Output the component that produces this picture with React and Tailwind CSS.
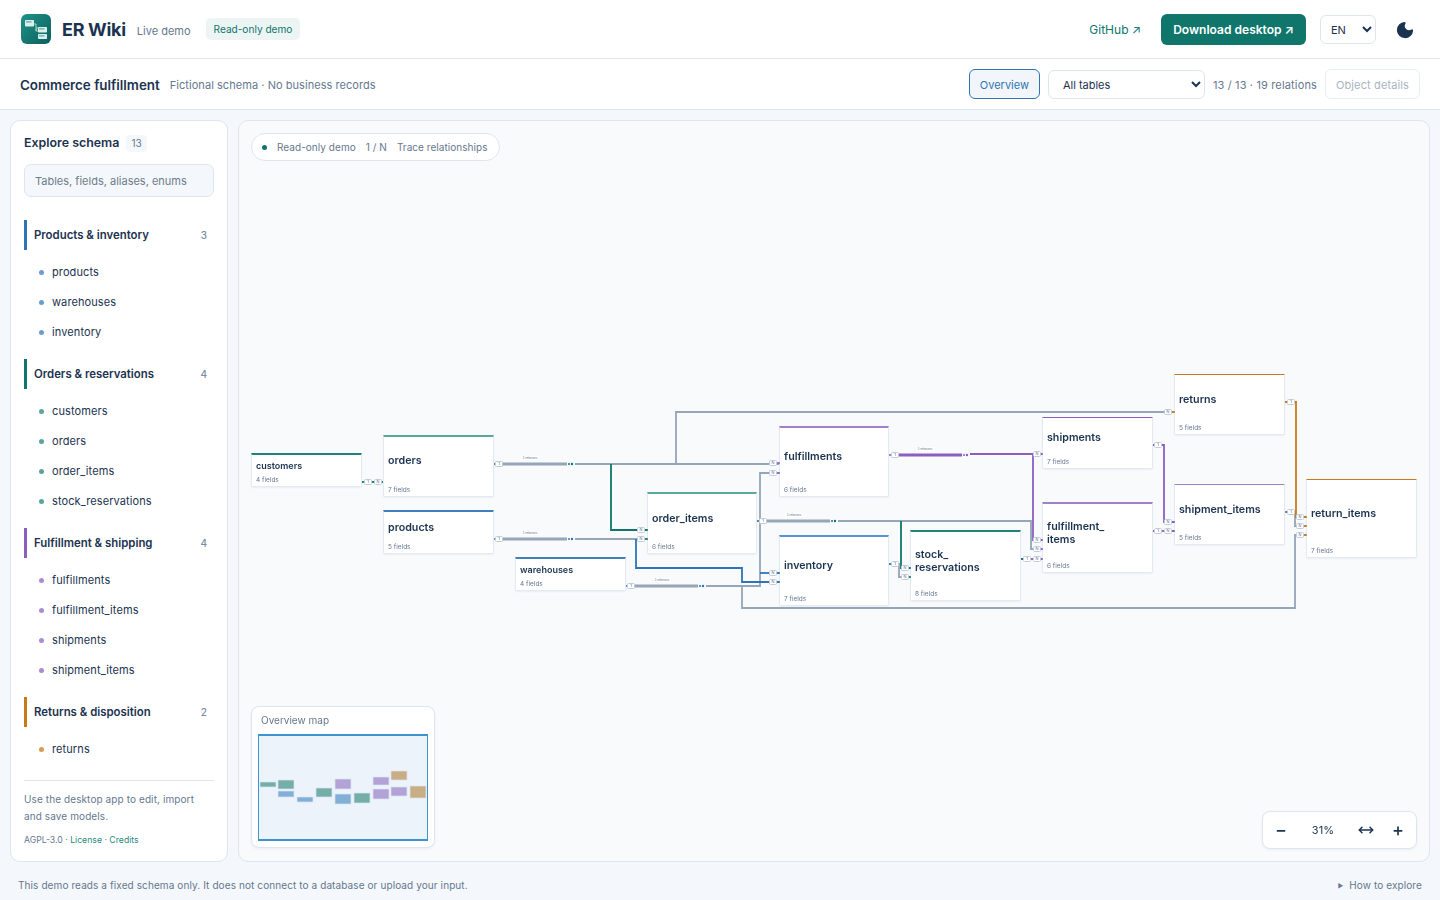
import React from 'react';
import { Moon, MoveHorizontal } from 'lucide-react';

const TEAL = '#0f766e';
const BLUE = '#2f75b5';
const PURPLE = '#8a5fbf';
const ORANGE = '#c9791a';
const SLATE = '#96a5b8';

const groups = [
  { name: 'Products & inventory', count: 3, bar: 'bg-[#2f75b5]', dot: 'bg-[#6b9bd0]', items: ['products', 'warehouses', 'inventory'] },
  { name: 'Orders & reservations', count: 4, bar: 'bg-[#0f766e]', dot: 'bg-[#5aa49d]', items: ['customers', 'orders', 'order_items', 'stock_reservations'] },
  { name: 'Fulfillment & shipping', count: 4, bar: 'bg-[#8a5fbf]', dot: 'bg-[#ab8bd2]', items: ['fulfillments', 'fulfillment_items', 'shipments', 'shipment_items'] },
  { name: 'Returns & disposition', count: 2, bar: 'bg-[#c9791a]', dot: 'bg-[#d99a52]', items: ['returns'] },
];

// page coordinates, the canvas offset is taken off when drawing
const nodes = [
  { name: 'customers', fields: 4, x: 251, y: 453, w: 111, h: 34, color: '#1f8379', line: 2, small: true, top: 1 },
  { name: 'orders', fields: 7, x: 383, y: 435, w: 111, h: 62, color: '#5aa79e', line: 2, bottom: 2 },
  { name: 'products', fields: 5, x: 383, y: 510, w: 111, h: 44, color: '#3f80bd', line: 2, top: 1 },
  { name: 'warehouses', fields: 4, x: 515, y: 557, w: 111, h: 34, color: '#3f80bd', line: 2, small: true, top: 1 },
  { name: 'order_items', fields: 6, x: 647, y: 492, w: 110, h: 62, color: '#5aa79e', line: 2 },
  { name: 'fulfillments', fields: 6, x: 779, y: 426, w: 110, h: 71, color: '#a07fcb', line: 2 },
  { name: 'inventory', fields: 7, x: 779, y: 535, w: 110, h: 71, color: '#5b93cc', line: 2 },
  { name: ['stock_', 'reservations'], fields: 8, x: 910, y: 530, w: 111, h: 71, color: '#1f8379', line: 2 },
  { name: 'shipments', fields: 7, x: 1042, y: 417, w: 111, h: 52, color: PURPLE, bottom: 1 },
  { name: ['fulfillment_', 'items'], fields: 6, x: 1042, y: 502, w: 111, h: 71, color: '#a07fcb', line: 2 },
  { name: 'returns', fields: 5, x: 1174, y: 374, w: 111, h: 61, color: ORANGE },
  { name: 'shipment_items', fields: 5, x: 1174, y: 484, w: 111, h: 61, color: '#a07fcb' },
  { name: 'return_items', fields: 7, x: 1306, y: 479, w: 111, h: 79, color: ORANGE },
];

const edges = [
  { c: SLATE, w: 1.8, d: 'M575 464H779' },
  { c: SLATE, w: 1.8, d: 'M676 464V412H1174' },
  { c: SLATE, w: 1.8, d: 'M575 539H647' },
  { c: SLATE, w: 1.8, d: 'M705 586H760V473H779' },
  { c: SLATE, w: 1.8, d: 'M742 586V608H1295V535H1306' },
  { c: SLATE, w: 1.8, d: 'M838 521H1031V549H1043' },
  { c: SLATE, w: 1.8, d: 'M889 564H899V577H911' },
  { c: SLATE, w: 1.8, d: 'M1285 512H1295V526H1306' },
  { c: TEAL, w: 1.8, d: 'M611 464V530H647' },
  { c: TEAL, w: 1.8, d: 'M901 521V568H911' },
  { c: TEAL, w: 1.8, d: 'M362 482H383' },
  { c: BLUE, w: 1.8, d: 'M636 539V568H742V582H779' },
  { c: BLUE, w: 1.8, d: 'M760 573H779' },
  { c: PURPLE, w: 1.8, d: 'M968 454H1033V540H1043' },
  { c: PURPLE, w: 1.8, d: 'M1033 454H1043' },
  { c: PURPLE, w: 1.8, d: 'M1021 559H1043' },
  { c: PURPLE, w: 1.8, d: 'M1153 531H1174' },
  { c: PURPLE, w: 1.8, d: 'M1153 445H1164V522H1174' },
  { c: ORANGE, w: 1.8, d: 'M1285 402H1296V517H1306' },
  // thick runs beside the grouped relation labels
  { c: SLATE, w: 3, d: 'M497 464H567' },
  { c: SLATE, w: 3, d: 'M497 539H567' },
  { c: SLATE, w: 3, d: 'M630 586H699' },
  { c: SLATE, w: 3, d: 'M761 521H830' },
  { c: PURPLE, w: 3, d: 'M893 455H962' },
];

// short coloured ends where a relation meets its table
const stubs = [
  [494, 464, 497, TEAL], [494, 539, 497, BLUE], [626, 586, 630, BLUE], [757, 521, 761, TEAL],
  [889, 455, 893, PURPLE], [889, 564, 893, BLUE], [1021, 559, 1025, TEAL], [1153, 445, 1156, PURPLE],
  [1153, 531, 1156, PURPLE], [1285, 402, 1288, ORANGE], [1285, 512, 1288, PURPLE],
  [645, 530, 648, TEAL], [645, 539, 648, TEAL], [777, 463, 780, PURPLE], [777, 473, 780, PURPLE],
  [777, 573, 780, BLUE], [777, 582, 780, BLUE], [909, 568, 911, TEAL], [909, 577, 911, TEAL],
  [1041, 454, 1043, PURPLE], [1041, 540, 1043, PURPLE], [1041, 549, 1043, PURPLE], [1041, 559, 1043, PURPLE],
  [1172, 412, 1175, ORANGE], [1172, 522, 1175, PURPLE], [1172, 531, 1175, PURPLE],
  [1304, 517, 1307, ORANGE], [1304, 526, 1307, ORANGE], [1304, 535, 1307, ORANGE],
];

const dots = [
  [571, 464, TEAL], [571, 539, BLUE], [702, 586, BLUE], [834, 521, TEAL], [966, 455, PURPLE],
];

const labels = [
  [530, 458, '3 relations'], [530, 533, '3 relations'], [662, 580, '3 relations'], [794, 515, '3 relations'], [925, 449, '3 relations'],
];

const badges = [
  [368, 482, '1'], [378, 482, 'N'],
  [499, 464, '1'], [499, 539, '1'], [631, 586, '1'], [763, 521, '1'], [895, 455, '1'], [895, 564, '1'],
  [641, 530, 'N'], [641, 539, 'N'],
  [773, 463, 'N'], [773, 473, 'N'], [773, 573, 'N'], [773, 582, 'N'],
  [905, 568, 'N'], [905, 577, 'N'],
  [1027, 559, '1'], [1037, 559, 'N'], [1037, 454, 'N'], [1037, 540, 'N'], [1037, 549, 'N'],
  [1158, 445, '1'], [1158, 531, '1'], [1168, 531, 'N'], [1168, 522, 'N'], [1168, 412, 'N'],
  [1291, 402, '1'], [1291, 512, '1'], [1300, 517, 'N'], [1300, 526, 'N'], [1300, 535, 'N'],
];

const mapBlocks = [
  [260, 782, 16, 5, '#74aea9'], [278, 780, 16, 9, '#74aea9'], [278, 791, 16, 6, '#83aed8'],
  [297, 797, 16, 5, '#83aed8'], [316, 788, 16, 9, '#74aea9'], [335, 779, 16, 10, '#b3a2d6'],
  [335, 794, 16, 10, '#83aed8'], [354, 793, 16, 10, '#74aea9'], [373, 777, 16, 8, '#b3a2d6'],
  [373, 789, 16, 10, '#b3a2d6'], [391, 771, 16, 9, '#c9ad85'], [391, 787, 16, 9, '#b3a2d6'],
  [410, 786, 16, 12, '#c9ad85'],
];

function Logo() {
  return (
    <svg width="30" height="30" viewBox="0 0 30 30" className="shrink-0">
      <defs>
        <linearGradient id="logo" x1="0" y1="0" x2="1" y2="1">
          <stop offset="0" stopColor="#1f9488" />
          <stop offset="1" stopColor="#0b5f5e" />
        </linearGradient>
      </defs>
      <rect width="30" height="30" rx="6" fill="url(#logo)" />
      <path d="M13 10H15V17M15 17H18M15 14H18" stroke="#9fd8cf" strokeWidth="1" fill="none" />
      <path d="M14.500 15H16V16.500H14.500Z" fill="#e2c15a" />
      <rect x="4" y="6" width="9" height="6.500" rx="0.800" fill="#d9efec" />
      <rect x="5" y="7.200" width="5.500" height="1.300" fill="#6fa9a4" />
      <rect x="17" y="13" width="9" height="5.500" rx="0.800" fill="#d9efec" />
      <rect x="18" y="14.200" width="5.500" height="1.300" fill="#6fa9a4" />
      <rect x="17" y="20" width="9" height="5" rx="0.800" fill="#d9efec" />
      <rect x="18" y="21.200" width="5.500" height="1.300" fill="#6fa9a4" />
    </svg>
  );
}

function Node({ node }) {
  const lines = Array.isArray(node.name) ? node.name : [node.name];
  return (
    <div
      className="absolute flex flex-col bg-white border border-[#e3eaf3] rounded-b-[2px] px-[4px] shadow-[0_1px_2px_rgba(30,55,90,0.06)] will-change-transform"
      style={{
        left: node.x - 239,
        top: node.y - 121,
        width: node.w,
        height: node.h,
        borderTop: `${node.line || 1}px solid ${node.color}`,
      }}
    >
      <div
        className={`flex-1 flex flex-col justify-center font-semibold text-[#1b3350] ${node.small ? 'text-[9px] leading-[11px]' : 'text-[10.700px] leading-[13px]'}`}
        style={{ paddingTop: node.top || 0, paddingBottom: node.bottom || 0 }}
      >
        {lines.map(l => <span key={l}>{l}</span>)}
      </div>
      <div className="h-[11px] pt-[1px] text-[6.500px] leading-[9px] text-[#66788f]">{node.fields} fields</div>
    </div>
  );
}

function Diagram() {
  return (
    <>
      <svg className="absolute left-0 top-0" width="1190" height="740" viewBox="239 121 1190 740">
        {edges.map((e, i) => (
          <path key={i} d={e.d} stroke={e.c} strokeWidth={e.w} fill="none" />
        ))}
        {dots.map(([x, y, c], i) => (
          <g key={i}>
            <rect x={x - 4} y={y - 2} width="8" height="4" fill="#f8fafc" />
            <circle cx={x - 2} cy={y} r="1" fill={c} />
            <circle cx={x + 1} cy={y} r="1.200" fill={c} />
          </g>
        ))}
        {labels.map(([x, y, t], i) => (
          <g key={i}>
            <rect x={x - 9} y={y - 2} width="18" height="4" fill="#ffffff" />
            <text x={x} y={y + 1} fontSize="3" textAnchor="middle" fill="#66788f">{t}</text>
          </g>
        ))}
      </svg>
      {nodes.map(n => <Node key={n.x + '-' + n.y} node={n} />)}
      <svg className="absolute left-0 top-0 will-change-transform" width="1190" height="740" viewBox="239 121 1190 740">
        {stubs.map(([x1, y, x2, c], i) => (
          <path key={i} d={`M${x1} ${y}H${x2}`} stroke={c} strokeWidth="1.500" fill="none" />
        ))}
        {badges.map(([x, y, t], i) => (
          <g key={i}>
            <rect x={x - 3.500} y={y - 2.500} width="7" height="5" rx="1" fill="#ffffff" stroke="#c0ccda" strokeWidth="1" />
            <text x={x} y={y + 1.400} fontSize="4" textAnchor="middle" fill="#5c6f86">{t}</text>
          </g>
        ))}
      </svg>
    </>
  );
}

function Sidebar() {
  return (
    <aside className="w-[218px] shrink-0 flex flex-col bg-white border border-[#dde6f0] rounded-[10px] px-[13px] pt-[13px] pb-[15px]">
      <div className="flex items-center gap-[7px] h-[17px] pt-[1px]">
        <h2 className="text-[12.400px] font-semibold text-[#1b3350]">Explore schema</h2>
        <span className="bg-[#f4f7fb] rounded-[4px] px-[5px] py-[1px] text-[10px] text-[#66788f]">13</span>
      </div>
      <input
        placeholder="Tables, fields, aliases, enums"
        className="mt-[13px] h-[33px] w-full bg-[#f4f7fb] border border-[#dde6f0] rounded-[7px] px-[10px] text-[11px] text-[#1b3350] placeholder:text-[#6f7c8b] outline-none"
      />
      <div className="mt-[23px] flex flex-col gap-[12px]">
        {groups.map(g => (
          <div key={g.name}>
            <div className="flex items-center h-[30px]">
              <span className={`w-[3px] h-full ${g.bar}`} />
              <span className="ml-[7px] pt-[2px] flex-1 text-[11.400px] font-semibold text-[#1b3350]">{g.name}</span>
              <span className="mr-[7px] pt-[1px] text-[10px] font-medium text-[#7b8ba0]">{g.count}</span>
            </div>
            <ul className="mt-[7px]">
              {g.items.map(item => (
                <li key={item} className="flex items-center h-[30px] pl-[15px] text-[11px] tracking-[0.1px] text-[#1b3350]">
                  <span className={`w-[5px] h-[5px] rounded-full ${g.dot}`} />
                  <span className="ml-[8px]">{item}</span>
                </li>
              ))}
            </ul>
          </div>
        ))}
      </div>
      <div className="mt-auto border-t border-[#dde6f0] pt-[10px]">
        <p className="text-[10px] tracking-[0.1px] leading-[17px] text-[#66788f]">Use the desktop app to edit, import<br />and save models.</p>
        <p className="mt-[9px] text-[8.700px] leading-[12px] text-[#66788f]">
          AGPL-3.0 · <a className="text-[#2a8a80]">License</a> · <a className="text-[#2a8a80]">Credits</a>
        </p>
      </div>
    </aside>
  );
}

export default function App() {
  return (
    <div className="h-screen w-full overflow-hidden flex flex-col bg-[#f4f7fb] text-[#1b3350] font-['Inter',sans-serif]">
      <header className="h-[59px] shrink-0 flex items-center bg-white border-b border-[#dde6f0] pl-[21px] pr-[25px]">
        <Logo />
        <span className="ml-[11px] text-[18px] font-bold tracking-[-0.3px] text-[#1b3350]">ER Wiki</span>
        <span className="ml-[11px] mt-[5px] text-[11px] text-[#66788f]">Live demo</span>
        <span className="ml-[15px] h-[22px] pt-[1px] flex items-center rounded-[5px] bg-[#ecf5f3] px-[8px] text-[10.100px] text-[#0f766e]">Read-only demo</span>
        <a className="ml-auto pt-[2px] text-[12px] text-[#0f766e]">GitHub ↗</a>
        <a className="ml-[20px] h-[31px] pt-[2px] flex items-center rounded-[6px] bg-[#10766c] px-[12px] text-[12px] font-semibold tracking-[0.02px] text-white">Download desktop ↗</a>
        <select defaultValue="EN" className="ml-[14px] h-[29px] w-[56px] pt-[1px] bg-white border border-[#dde6f0] rounded-[6px] px-[6px] text-[11px] text-[#1b3350]">
          <option>EN</option>
        </select>
        <button className="ml-[19px] mt-[1px] flex items-center justify-center text-[#1b3350]">
          <Moon size={20} fill="#1b3350" strokeWidth={1.5} />
        </button>
      </header>

      <div className="h-[51px] shrink-0 flex items-center bg-white border-b border-[#dde6f0] pl-[20px] pr-[20px]">
        <h1 className="pt-[2px] text-[13.400px] font-semibold text-[#1b3350]">Commerce fulfillment</h1>
        <span className="ml-[10px] pt-[2px] text-[11px] tracking-[0.05px] text-[#66788f]">Fictional schema · No business records</span>
        <button className="ml-auto h-[30px] w-[71px] pt-[2px] rounded-[6px] border border-[#2f75b5] bg-[#f2f6fb] text-[11px] text-[#2f75b5]">Overview</button>
        <select defaultValue="All tables" className="ml-[8px] h-[29px] w-[157px] pt-[1px] bg-white border border-[#dde6f0] rounded-[6px] px-[10px] text-[11px] text-[#1b3350]">
          <option>All tables</option>
        </select>
        <span className="ml-[8px] pt-[2px] text-[11px] tracking-[0.15px] text-[#66788f]">13 / 13 · 19 relations</span>
        <button disabled className="ml-[8px] h-[30px] w-[95px] pt-[2px] rounded-[6px] border border-[#e8edf4] bg-white text-[11px] tracking-[0.13px] text-[#a9b4c2]">Object details</button>
      </div>

      <main className="flex-1 min-h-0 flex gap-[10px] px-[10px] pt-[10px]">
        <Sidebar />
        <section className="relative flex-1 overflow-hidden rounded-[10px] border border-[#dde6f0] bg-[#f8fafc] bg-[radial-gradient(#e1e7ef_0.5px,transparent_0.6px)] bg-[size:10px_10px]">
          <Diagram />

          <div className="absolute left-[12px] top-[12px] h-[28px] w-[249px] flex items-center rounded-full border border-[#dde6f0] bg-white pl-[10px] text-[10px] tracking-[0.05px] text-[#66788f]">
            <span className="w-[5px] h-[5px] rounded-full bg-[#0f766e]" />
            <span className="ml-[10px]">Read-only demo</span>
            <span className="ml-[10px]">1 / N</span>
            <span className="ml-[10px]">Trace relationships</span>
          </div>

          <div className="absolute left-[12px] bottom-[13px] h-[142px] w-[184px] rounded-[8px] border border-[#dde6f0] bg-white px-[6px] pb-[6px] shadow-[0_1px_3px_rgba(30,55,90,0.06)]">
            <div className="h-[27px] pl-[3px] flex items-center text-[10px] text-[#66788f]">Overview map</div>
            <div className="h-[107px] w-[170px] bg-[#ecf3fb] border border-[#3b93cf] border-y-2 overflow-hidden">
              <svg width="168" height="103" viewBox="259 736 168 103">
                {mapBlocks.map(([x, y, w, h, c], i) => (
                  <rect key={i} x={x} y={y} width={w} height={h} fill={c} stroke="#dbe6f2" strokeWidth="0.700" />
                ))}
              </svg>
            </div>
          </div>

          <div className="absolute right-[12px] bottom-[12px] h-[38px] w-[155px] flex items-center rounded-[8px] border border-[#dde6f0] bg-white pl-[12px] pr-[12px] text-[#1b3350] shadow-[0_1px_3px_rgba(30,55,90,0.06)]">
            <span className="w-[11px] text-center text-[18px] font-medium leading-none">−</span>
            <span className="ml-[24px] w-[26px] text-center text-[11px] tracking-[0.2px]">31%</span>
            <span className="ml-[22px] w-[16px] flex justify-center">
              <MoveHorizontal size={16} strokeWidth={2.2} />
            </span>
            <span className="ml-auto w-[12px] text-center text-[18px] font-medium leading-none">+</span>
          </div>
        </section>
      </main>

      <footer className="h-[38px] shrink-0 flex items-center justify-between pl-[18px] pr-[18px] pt-[8px] text-[10px] tracking-[0.1px] text-[#66788f]">
        <span>This demo reads a fixed schema only. It does not connect to a database or upload your input.</span>
        <span className="flex items-center gap-[6px]">
          <span className="text-[6px]">▶</span>
          How to explore
        </span>
      </footer>
    </div>
  );
}
